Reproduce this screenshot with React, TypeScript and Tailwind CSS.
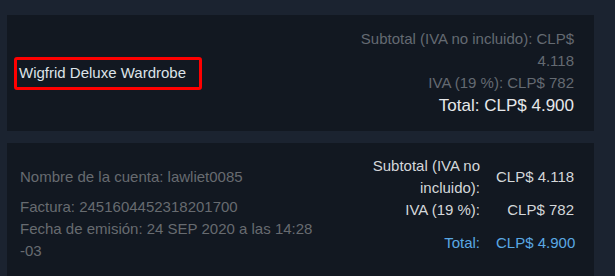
export default function App() {
  return (
    <div
      className="w-[615px] h-[276px] overflow-hidden bg-[#1b2330] pt-[15px] pl-[7px]"
      style={{ fontFamily: '"Liberation Sans", Arial, sans-serif' }}
    >
      {/* ===== PRODUCT SUMMARY ===== */}
      <div className="w-[587px] h-[116px] bg-[#121821] flex items-center justify-between pl-[7px] pr-[20px]">
        <div className="w-[188px] h-[33px] border-[3px] border-[#ff0000] rounded-[3px] flex items-center pl-[2px]">
          <span className="text-[15px] leading-[22px] text-[#dde3e8]">
            Wigfrid Deluxe Wardrobe
          </span>
        </div>

        <div className="w-[222px] text-right">
          <p className="text-[15px] leading-[22px] text-[#646a72]">
            Subtotal (IVA no incluido): CLP$ 4.118
          </p>
          <p className="text-[15px] leading-[22px] text-[#646a72]">
            IVA (19 %): CLP$ 782
          </p>
          <p className="text-[17px] leading-[24px] text-[#e6e8ea]">
            Total: CLP$ 4.900
          </p>
        </div>
      </div>

      {/* ===== INVOICE DETAILS ===== */}
      <div className="w-[587px] mt-[12px] h-[160px] bg-[#121821] flex justify-between pl-[13px] pr-[20px]">
        <div className="w-[300px] pt-[23px] text-[15px] leading-[22px] text-[#676b70]">
          <p>Nombre de la cuenta: lawliet0085</p>
          <p className="mt-[8px]">Factura: 2451604452318201700</p>
          <p>Fecha de emisión: 24 SEP 2020 a las 14:28 -03</p>
        </div>

        <div className="pt-[12px] text-[15px] leading-[22px]">
          <div className="flex items-center gap-[16px] text-[#d4d7da]">
            <span className="w-[112px] text-right">Subtotal (IVA no incluido):</span>
            <span className="w-[78px] text-right whitespace-nowrap">CLP$ 4.118</span>
          </div>
          <div className="flex items-center gap-[16px] text-[#d4d7da]">
            <span className="w-[112px] text-right">IVA (19 %):</span>
            <span className="w-[78px] text-right whitespace-nowrap">CLP$ 782</span>
          </div>
          <div className="flex items-center gap-[16px] pt-[11px] text-[#5aa8e4]">
            <span className="w-[112px] text-right">Total:</span>
            <span className="w-[78px] text-right whitespace-nowrap">CLP$ 4.900</span>
          </div>
        </div>
      </div>
    </div>
  );
}
